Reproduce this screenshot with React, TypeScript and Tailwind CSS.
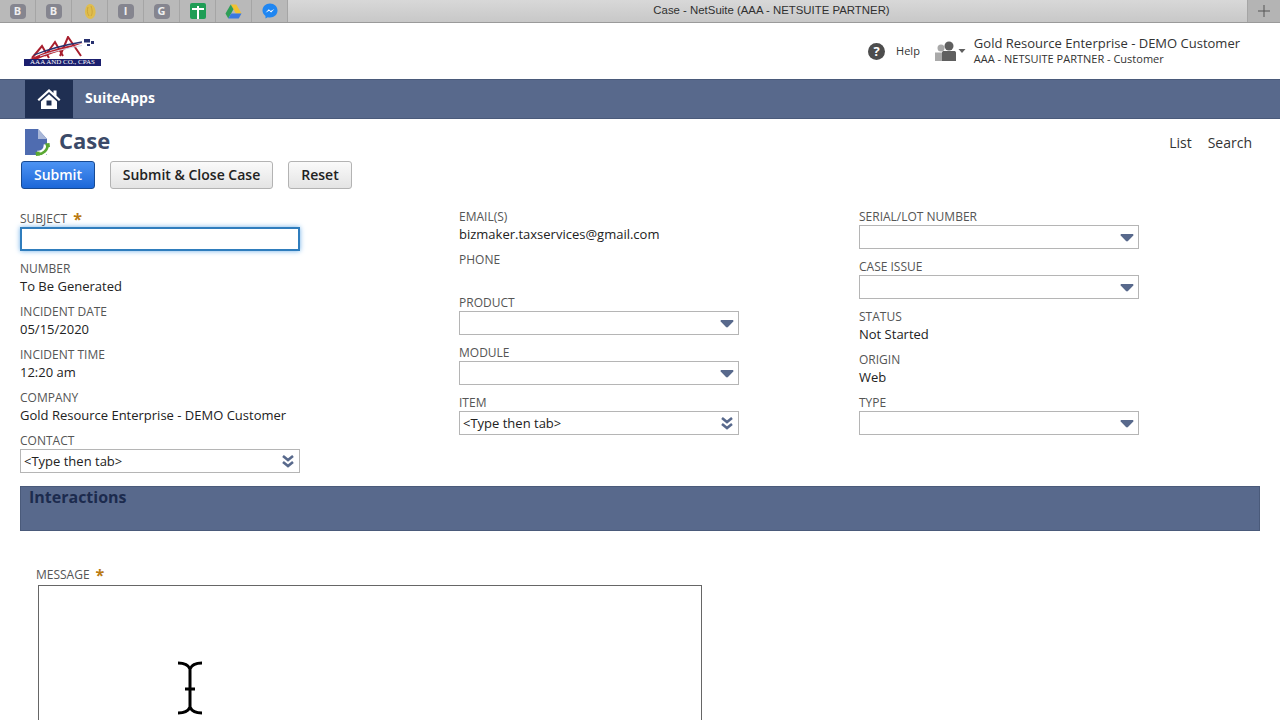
import React from 'react';

const FONT = { fontFamily: '"Open Sans", "Noto Sans", sans-serif' };

function LetterFav({ letter }: { letter: string }) {
  return (
    <div className="w-[16px] h-[15px] rounded-[4px] bg-[#85858f] flex items-center justify-center text-[11px] font-bold text-[#eeeeee]">
      {letter}
    </div>
  );
}

function Tab({ children }: { children: React.ReactNode }) {
  return (
    <div className="w-[36px] h-full flex items-center justify-center border-r border-[#a5a5a5]">
      {children}
    </div>
  );
}

function TabStrip() {
  return (
    <div className="h-[23px] flex bg-[#b9b9b9] border-b border-[#9a9a9a]">
      <Tab><LetterFav letter="B" /></Tab>
      <Tab><LetterFav letter="B" /></Tab>
      <Tab>
        <svg width="14" height="17" viewBox="0 0 14 17">
          <path d="M7 1c3 0 5 3 5.500 7s-2 8-5 8-5.500-3-5.500-7 2-8 5-8z" fill="#dfbd4e" />
          <path d="M5 4c-1 3-1 6 1 9M8 3c1 3 2 7 0 10" fill="none" stroke="#cda53a" strokeWidth="1" />
        </svg>
      </Tab>
      <Tab><LetterFav letter="I" /></Tab>
      <Tab><LetterFav letter="G" /></Tab>
      <Tab>
        <div className="w-[16px] h-[16px] rounded-[2px] bg-[#1f9d55] relative">
          <div className="absolute left-[7px] top-[3px] w-[2px] h-[13px] bg-white" />
          <div className="absolute left-[2px] top-[5px] w-[12px] h-[2px] bg-white" />
        </div>
      </Tab>
      <Tab>
        <svg width="17" height="15" viewBox="0 0 17 15">
          <path d="M5.700 0.500h5.600L16.500 9.500h-5.600z" fill="#f2c230" />
          <path d="M5.700 0.500l2.800 4.800L3.300 14.500 0.500 9.500z" fill="#2f9e57" />
          <path d="M3.300 14.500l2.800-5h10.400l-2.800 5z" fill="#3b78e0" />
        </svg>
      </Tab>
      <Tab>
        <svg width="16" height="16" viewBox="0 0 16 16">
          <path d="M8 0.500c4.300 0 7.500 3 7.500 7s-3.200 7-7.500 7c-0.800 0-1.500-0.100-2.200-0.300L3.500 15.500v-2.600C1.600 11.600 0.500 9.700 0.500 7.500c0-4 3.200-7 7.500-7z" fill="#1f86f2" />
          <path d="M3.500 9.800l3.300-3.500 1.900 1.800 3.700-2-3.300 3.500-1.900-1.800z" fill="#ffffff" />
        </svg>
      </Tab>
      <div
        className="flex-1 flex items-center justify-center pl-[8px] bg-gradient-to-b from-[#d8d8d8] to-[#c8c8c8] text-[11.4px] text-[#303030]"
        style={{ fontFamily: '"Liberation Sans", Arial, sans-serif' }}
      >
        Case - NetSuite (AAA - NETSUITE PARTNER)
      </div>
      <div className="w-[33px] flex items-center justify-center bg-[#b4b4b4] border-l border-[#a5a5a5]">
        <svg width="12" height="12" viewBox="0 0 12 12">
          <path d="M6 0v12M0 6h12" stroke="#555555" strokeWidth="1" />
        </svg>
      </div>
    </div>
  );
}

function Logo() {
  return (
    <div className="w-[77px] flex flex-col items-stretch">
      <svg width="77" height="23" viewBox="0 0 77 23" className="block">
        <g fill="none" stroke="#a81e2d" strokeWidth="2">
          <path d="M8 22L18 10l7 12" />
          <path d="M21 20L31 6l8 14" />
          <path d="M36 20L44 1l13 19" />
        </g>
        <path d="M6 23C22 15 40 10 59 7C42 13 26 18 14 23z" fill="#b5202f" />
        <path d="M10 19C25 13 40 9 58 6" fill="none" stroke="#27306f" strokeWidth="1.300" />
        <path d="M16 20C30 15 44 12 58 9.500" fill="none" stroke="#d6d8e8" strokeWidth="1" />
        <rect x="60" y="3" width="6" height="3.500" fill="#27306f" />
        <rect x="67" y="5" width="3" height="3" fill="#27306f" />
        <rect x="63" y="8" width="3" height="2" fill="#27306f" />
      </svg>
      <div
        className="h-[7px] bg-[#1b1f6e] text-white text-[7px] leading-[7px] text-center whitespace-nowrap overflow-hidden"
        style={{ fontFamily: '"Liberation Serif", serif' }}
      >
        AAA AND CO., CPAS
      </div>
    </div>
  );
}

function Header() {
  return (
    <div className="h-[56px] bg-white flex items-center pl-[24px] pr-[40px]">
      <Logo />
      <div className="ml-auto flex items-center">
        <div className="w-[17px] h-[17px] rounded-full bg-[#4d4d4d] text-white text-[13px] leading-[17px] font-bold text-center">?</div>
        <span className="ml-[11px] text-[11px] text-[#333333]">Help</span>
        <svg width="31" height="20" viewBox="0 0 31 20" className="ml-[15px]">
          <circle cx="6" cy="7" r="3.500" fill="#a9a9a9" />
          <rect x="0" y="11.500" width="8" height="8.500" fill="#a9a9a9" />
          <circle cx="14" cy="5" r="4.500" fill="#5f5f5f" />
          <path d="M7 20v-8.500c0-1 1-1.500 2-1.500h10c1 0 2 .5 2 1.500V20z" fill="#5f5f5f" />
          <path d="M23.500 8h7l-3.500 4z" fill="#5f5f5f" />
        </svg>
        <div className="ml-[8px] flex flex-col">
          <span className="text-[13px] leading-[16px] text-[#333333]">Gold Resource Enterprise - DEMO Customer</span>
          <span className="text-[11px] leading-[16px] text-[#333333]">AAA - NETSUITE PARTNER - Customer</span>
        </div>
      </div>
    </div>
  );
}

function NavBar() {
  return (
    <div className="h-[40px] bg-[#58698c] border-t border-b border-[#4a5a7a] flex items-stretch pl-[25px]">
      <div className="w-[48px] bg-[#1f2f52] flex items-center justify-center">
        <svg width="24" height="22" viewBox="0 0 24 22">
          <path d="M12 1L0.500 11.500 2 13l10-9 10 9 1.500-1.500-4-3.700V2.500h-3v2.500z" fill="#ffffff" />
          <path d="M4 13.500L12 6.300l8 7.200V21H4zM9.500 12.500v5h5v-5z" fill="#ffffff" fillRule="evenodd" />
        </svg>
      </div>
      <div className="ml-[12px] pb-[3px] flex items-center text-[14px] font-bold text-white">SuiteApps</div>
    </div>
  );
}

function CaseIcon() {
  return (
    <svg width="27" height="29" viewBox="0 0 27 29">
      <path d="M1 1h13l9 10v16H1z" fill="#4f6cb0" />
      <path d="M14 1l9 10h-9z" fill="#a9b7d8" />
      <path d="M23 16C24 22 19 27 13 26" fill="none" stroke="#ffffff" strokeWidth="7" />
      <path d="M23.500 16.500C24 22 19 26.500 13.500 26" fill="none" stroke="#5aa832" strokeWidth="2.500" />
      <path d="M21 15.500l4.500-.5 .5 4-3.500 .5zM11.500 24l4-.5 .5 4-4 .5z" fill="#5aa832" />
    </svg>
  );
}

function Button({ children, primary, className }: { children: React.ReactNode; primary?: boolean; className: string }) {
  return (
    <button
      className={
        primary
          ? `h-[28px] pb-[1px] rounded-[3px] border border-[#174a93] bg-gradient-to-b from-[#4c93f3] to-[#1b67d8] text-white text-[14px] font-semibold ${className}`
          : `h-[28px] pb-[1px] rounded-[3px] border border-[#b3b3b3] bg-gradient-to-b from-[#fafafa] to-[#e4e4e4] text-[#222222] text-[14px] font-semibold ${className}`
      }
    >
      {children}
    </button>
  );
}

function Label({ children, required }: { children: React.ReactNode; required?: boolean }) {
  return (
    <div className="h-[18px] text-[12px] leading-[20px] text-[#555555] flex whitespace-nowrap">
      {children}
      {required && <span className="ml-[6px] text-[#b97a12] text-[16px] leading-[20px] font-bold">*</span>}
    </div>
  );
}

function ValueField({ label, value }: { label: string; value: string }) {
  return (
    <div className="mb-[7px]">
      <Label>{label}</Label>
      <div className="h-[18px] text-[13px] leading-[18px] text-[#222222] whitespace-nowrap">{value}</div>
    </div>
  );
}

function Caret() {
  return (
    <svg width="14" height="8" viewBox="0 0 14 8" className="mt-[2px] mr-[-1px]">
      <path d="M0.500 1c0-.5.500-1 1-1h11c.5 0 1 .5 1 1 0 .3-.2.500-.4.700L8 7c-.6.600-1.400.600-2 0L.9 1.700C.7 1.500.500 1.300.500 1z" fill="#58698c" />
    </svg>
  );
}

function DoubleCaret() {
  return (
    <svg width="12" height="13" viewBox="0 0 12 13">
      <path d="M1 1l5 4 5-4M1 7l5 4 5-4" fill="none" stroke="#58698c" strokeWidth="2.600" />
    </svg>
  );
}

function SelectField({ label, value, double }: { label: string; value?: string; double?: boolean }) {
  return (
    <div className="mb-[8px]">
      <Label>{label}</Label>
      <div className="w-[280px] h-[24px] border border-[#b5b5b5] bg-white flex items-center pl-[3px] pr-[5px] text-[13px] text-[#222222]">
        <span className="mt-[2px]">{value}</span>
        <span className="ml-auto flex items-center">{double ? <DoubleCaret /> : <Caret />}</span>
      </div>
    </div>
  );
}

function FormGrid() {
  return (
    <div className="grid grid-cols-[439px_400px_1fr] pl-[20px] mt-[18px] h-[279px]">
      <div className="pt-[2px]">
        <Label required>SUBJECT</Label>
        <div className="w-[280px] h-[24px] border-2 border-[#2f7dbd] bg-white shadow-[0_0_5px_#6fb0e8] mb-[8px]" />
        <ValueField label="NUMBER" value="To Be Generated" />
        <ValueField label="INCIDENT DATE" value="05/15/2020" />
        <ValueField label="INCIDENT TIME" value="12:20 am" />
        <ValueField label="COMPANY" value="Gold Resource Enterprise - DEMO Customer" />
        <SelectField label="CONTACT" value="<Type then tab>" double />
      </div>
      <div>
        <ValueField label="EMAIL(S)" value="bizmaker.taxservices@gmail.com" />
        <ValueField label="PHONE" value="" />
        <SelectField label="PRODUCT" />
        <SelectField label="MODULE" />
        <SelectField label="ITEM" value="<Type then tab>" double />
      </div>
      <div>
        <SelectField label="SERIAL/LOT NUMBER" />
        <SelectField label="CASE ISSUE" />
        <ValueField label="STATUS" value="Not Started" />
        <ValueField label="ORIGIN" value="Web" />
        <SelectField label="TYPE" />
      </div>
    </div>
  );
}

function TextCursor() {
  return (
    <svg width="26" height="54" viewBox="0 0 26 54" className="absolute left-[138px] top-[75px]">
      <path
        d="M1 2c5 0 10 1 12 6 2-5 7-6 12-6M13 8v38M1 52c5 0 10-1 12-6 2 5 7 6 12 6M8 28h10"
        fill="none"
        stroke="#000000"
        strokeWidth="3"
      />
    </svg>
  );
}

export default function App() {
  return (
    <div className="w-[1280px] h-[720px] overflow-hidden bg-white text-[#222222]" style={FONT}>
      <TabStrip />
      <Header />
      <NavBar />

      <div className="h-[42px] flex items-start pl-[24px] pr-[28px]">
        <div className="pt-[9px]"><CaseIcon /></div>
        <h1 className="ml-[8px] mt-[5px] text-[22px] leading-[32px] font-bold text-[#3b4a68]">Case</h1>
        <div className="ml-auto mt-[14px] flex gap-[16px] text-[14px] leading-[20px] text-[#333333]">
          <span>List</span>
          <span>Search</span>
        </div>
      </div>

      <div className="flex pl-[21px]">
        <Button primary className="w-[74px]">Submit</Button>
        <Button className="w-[163px] ml-[15px]">Submit &amp; Close Case</Button>
        <Button className="w-[64px] ml-[15px]">Reset</Button>
      </div>

      <FormGrid />

      <div className="mx-[20px] h-[45px] bg-[#58698c] border border-[#4a5a7a] pl-[8px] text-[16px] leading-[20px] font-bold text-[#1c2b4e]">
        Interactions
      </div>

      <div className="pl-[36px] pt-[34px]">
        <Label required>MESSAGE</Label>
        <div className="relative ml-[2px] mt-[2px] w-[664px] h-[200px] border border-[#666666]">
          <TextCursor />
        </div>
      </div>
    </div>
  );
}
